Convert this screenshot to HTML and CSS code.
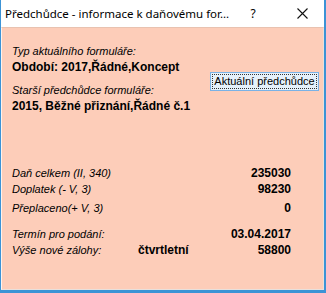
FILE: index.html
```html
<!DOCTYPE html>
<html>
<head>
    <title>Předchůdce</title>
    <link rel="stylesheet" href="styles.css">
</head>
<body>
    <div class="window">
        <div class="titlebar">
            <span class="title">Předchůdce - informace k daňovému for...</span>
            <span class="help">?</span>
            <svg class="close" width="11" height="11" viewBox="0 0 11 11">
                <path d="M0.5 0.5 L10.5 10.5 M10.5 0.5 L0.5 10.5" stroke="#111" stroke-width="1.1" fill="none"/>
            </svg>
        </div>

        <div class="content">
            <div class="top">
                <div class="info">
                    <div class="label">Typ aktuálního formuláře:</div>
                    <div class="value">Období: 2017,Řádné,Koncept</div>
                    <div class="label older">Starší předchůdce formuláře:</div>
                    <div class="value">2015, Běžné přiznání,Řádné č.1</div>
                </div>
                <button class="btn-current"><span>Aktuální předchůdce</span></button>
            </div>

            <div class="rows totals">
                <div class="label">Daň celkem (II, 340)</div>
                <div></div>
                <div class="value num">235030</div>
                <div class="label">Doplatek (- V, 3)</div>
                <div></div>
                <div class="value num">98230</div>
                <div class="label gap">Přeplaceno(+ V, 3)</div>
                <div class="gap"></div>
                <div class="value num gap">0</div>
            </div>

            <div class="rows deadline">
                <div class="label">Termín pro podání:</div>
                <div></div>
                <div class="value num">03.04.2017</div>
                <div class="label">Výše nové zálohy:</div>
                <div class="value">čtvrtletní</div>
                <div class="value num">58800</div>
            </div>
        </div>
    </div>
</body>
</html>
```

FILE: styles.css
```css
html, body {
    margin: 0;
    padding: 0;
    background: #fff;
}

.window {
    width: 326px;
    height: 293px;
    box-sizing: border-box;
    border: 1px solid #3c93d6;
    border-top: none;
    border-right-width: 2px;
    border-bottom-width: 3px;
    display: flex;
    flex-direction: column;
    font-family: "Liberation Sans", Arial, sans-serif;
    color: #000;
}

.titlebar {
    height: 27px;
    flex: none;
    display: flex;
    align-items: center;
    background: #fff;
    font-family: "Noto Sans", sans-serif;
    font-size: 11.5px;
}

.title {
    padding-left: 4px;
    white-space: nowrap;
}

.help {
    margin-left: auto;
    width: 12px;
    margin-right: 38px;
    text-align: center;
    font-size: 12px;
}

.close {
    flex: none;
    display: block;
    margin-right: 16px;
}

.content {
    flex: 1;
    background: #fdcdb9;
    border-top: 1px solid #e9c2b0;
    border-left: 1px solid #fff2ec;
    border-right: 1px solid #e8e0dc;
    border-bottom: 1px solid #e8e0dc;
    padding: 15px 4px 0 10px;
}

.label {
    font-style: italic;
    font-size: 11px;
    line-height: 16px;
}

.value {
    font-weight: bold;
    font-size: 12px;
    line-height: 16px;
}

.older {
    margin-top: 7px;
}

.top {
    display: flex;
    justify-content: space-between;
}

.btn-current {
    margin-top: 29px;
    width: 109px;
    height: 19px;
    padding: 1px;
    border: 1px solid #7ab2e6;
    background: #e5f1fb;
    font-family: "Liberation Sans", Arial, sans-serif;
    font-size: 11px;
    color: #000;
    display: flex;
}

.btn-current span {
    flex: 1;
    border: 1px dotted #333;
    line-height: 13px;
    white-space: nowrap;
    text-align: center;
}

.rows {
    display: grid;
    grid-template-columns: 126px 1fr auto;
    margin-right: 28px;
}

.totals {
    margin-top: 51px;
}

.deadline {
    margin-top: 10px;
}

.gap {
    margin-top: 3px;
}

.num {
    text-align: right;
}
```
